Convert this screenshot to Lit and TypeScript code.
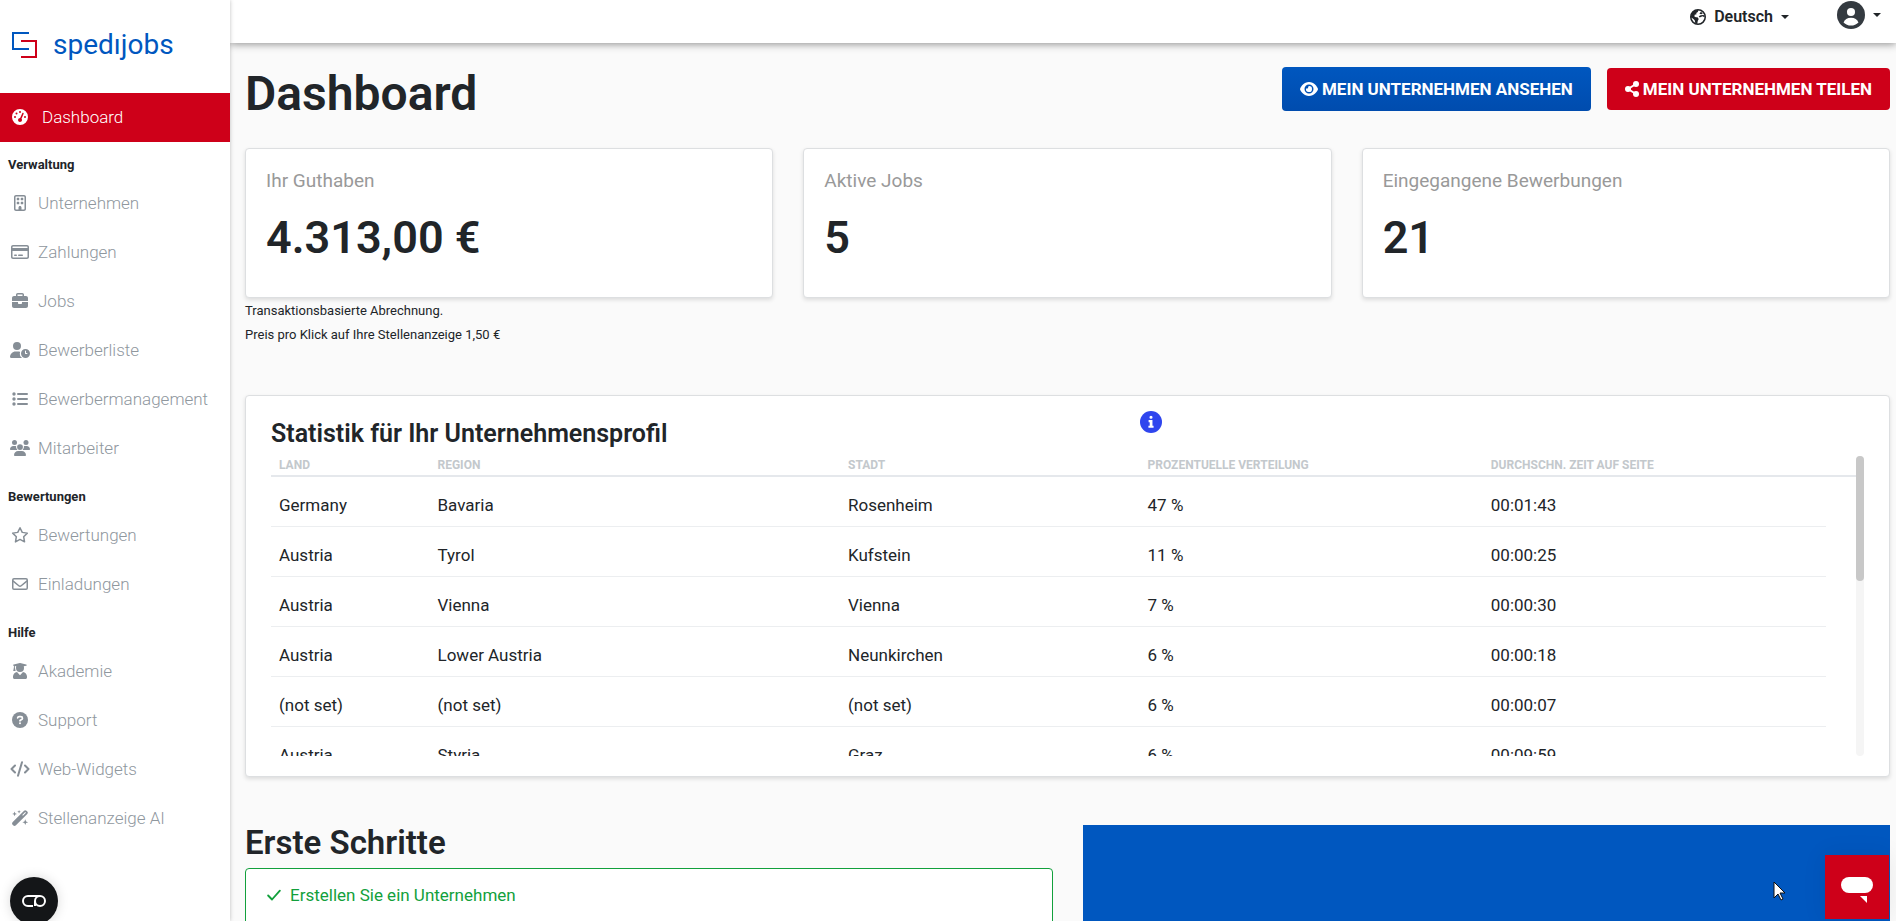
import { LitElement, html, svg, css, type SVGTemplateResult } from "lit";
import { customElement, property } from "lit/decorators.js";
import { classMap } from "lit/directives/class-map.js";

interface Glyph {
  box: string;
  art: SVGTemplateResult;
}

const glyphs: Record<string, Glyph> = {
  gauge: {
    box: "0 0 512 512",
    art: svg`<path fill-rule="evenodd" d="M0 256a256 256 0 1 1 512 0A256 256 0 1 1 0 256zM288 96a32 32 0 1 0-64 0 32 32 0 1 0 64 0zM256 416c35 0 64-29 64-64 0-16-6-31-16-42l69-158c5-12 0-26-12-32s-26 0-32 12l-69 158c-35 1-66 29-66 62 0 35 27 64 62 64zM176 144a32 32 0 1 0-64 0 32 32 0 1 0 64 0zM96 288a32 32 0 1 0 0-64 32 32 0 1 0 0 64zm352-32a32 32 0 1 0-64 0 32 32 0 1 0 64 0z"/>`,
  },
  building: {
    box: "0 0 384 512",
    art: svg`<path fill-rule="evenodd" d="M64 48c-8.800 0-16 7.200-16 16V448c0 8.800 7.200 16 16 16h80V400c0-26.500 21.500-48 48-48s48 21.500 48 48v64h80c8.800 0 16-7.200 16-16V64c0-8.800-7.200-16-16-16H64zM0 64C0 28.700 28.700 0 64 0H320c35.300 0 64 28.700 64 64V448c0 35.300-28.700 64-64 64H64c-35.300 0-64-28.700-64-64V64z"/><path d="M104 88h48a16 16 0 0 1 16 16v48a16 16 0 0 1-16 16h-48a16 16 0 0 1-16-16v-48a16 16 0 0 1 16-16zM232 88h48a16 16 0 0 1 16 16v48a16 16 0 0 1-16 16h-48a16 16 0 0 1-16-16v-48a16 16 0 0 1 16-16zM104 216h48a16 16 0 0 1 16 16v48a16 16 0 0 1-16 16h-48a16 16 0 0 1-16-16v-48a16 16 0 0 1 16-16zM232 216h48a16 16 0 0 1 16 16v48a16 16 0 0 1-16 16h-48a16 16 0 0 1-16-16v-48a16 16 0 0 1 16-16z"/>`,
  },
  card: {
    box: "0 0 576 512",
    art: svg`<path fill-rule="evenodd" d="M512 80c9 0 16 7 16 16v32H48V96c0-9 7-16 16-16H512zm16 144V416c0 9-7 16-16 16H64c-9 0-16-7-16-16V224H528zM64 32C29 32 0 61 0 96V416c0 35 29 64 64 64H512c35 0 64-29 64-64V96c0-35-29-64-64-64H64z"/><path d="M120 336a24 24 0 0 0 0 48h48a24 24 0 0 0 0-48zM248 336a24 24 0 0 0 0 48h112a24 24 0 0 0 0-48z"/>`,
  },
  briefcase: {
    box: "0 0 512 512",
    art: svg`<path fill-rule="evenodd" d="M184 48H328c4 0 8 4 8 8V96H176V56c0-4 4-8 8-8zm-56 8V96H64C29 96 0 125 0 160v96H512V160c0-35-29-64-64-64H384V56c0-31-25-56-56-56H184c-31 0-56 25-56 56zM512 288H320v32c0 18-14 32-32 32H224c-18 0-32-14-32-32V288H0V416c0 35 29 64 64 64H448c35 0 64-29 64-64V288z"/>`,
  },
  userClock: {
    box: "0 0 640 512",
    art: svg`<path d="M224 256A128 128 0 1 0 224 0a128 128 0 1 0 0 256zM178 304C80 304 0 384 0 482c0 17 13 30 30 30H393a176 176 0 0 1-70-196c-17-8-34-12-53-12z"/><path fill-rule="evenodd" d="M496 224a144 144 0 1 0 0 288 144 144 0 1 0 0-288zm-16 64c0-9 7-16 16-16s16 7 16 16v64h32c9 0 16 7 16 16s-7 16-16 16h-48c-9 0-16-7-16-16z"/>`,
  },
  list: {
    box: "0 0 512 512",
    art: svg`<circle cx="64" cy="96" r="54"/><circle cx="64" cy="256" r="54"/><circle cx="64" cy="416" r="54"/><path d="M192 64a32 32 0 0 0 0 64h288a32 32 0 0 0 0-64zM192 224a32 32 0 0 0 0 64h288a32 32 0 0 0 0-64zM192 384a32 32 0 0 0 0 64h288a32 32 0 0 0 0-64z"/>`,
  },
  users: {
    box: "0 0 640 512",
    art: svg`<circle cx="144" cy="80" r="80"/><circle cx="512" cy="80" r="80"/><circle cx="320" cy="224" r="92"/><path d="M0 299c0-59 48-107 107-107h43c16 0 31 4 45 10a128 128 0 0 0 41 118H21c-12 0-21-10-21-21zM640 299c0-59-48-107-107-107h-43c-16 0-31 4-45 10a128 128 0 0 1-41 118h215c12 0 21-10 21-21zM128 485c0-73 60-133 133-133h118c73 0 133 60 133 133 0 15-12 27-27 27H155c-15 0-27-12-27-27z"/>`,
  },
  star: {
    box: "0 0 512 512",
    art: svg`<path fill="none" stroke="currentColor" stroke-width="48" stroke-linejoin="round" d="M256 24l72 148 162 24-117 115 28 164-145-77-145 77 28-164L22 196l162-24z"/>`,
  },
  envelope: {
    box: "0 0 512 512",
    art: svg`<rect x="24" y="88" width="464" height="336" rx="40" fill="none" stroke="currentColor" stroke-width="48"/><path fill="none" stroke="currentColor" stroke-width="48" d="M28 158l190 155c22 18 54 18 76 0l190-155"/>`,
  },
  graduate: {
    box: "0 0 448 512",
    art: svg`<path d="M219 2 22 44c-29 6-29 34 0 41l8 2v58c-9 6-12 17-6 27L8 236c-3 11 3 20 12 20h50c9 0 15-9 12-20L66 172c6-10 3-21-6-27V94l44 11c-5 17-8 35-8 55a128 128 0 0 0 256 0c0-20-3-38-8-55l76-20c29-7 29-35 0-41L229 2c-3-1-7-1-10 0zM320 289 224 390l-96-101C56 299 0 361 0 434v30c0 27 21 48 48 48h352c27 0 48-21 48-48v-30c0-73-56-135-128-145z"/>`,
  },
  question: {
    box: "0 0 512 512",
    art: svg`<circle cx="256" cy="256" r="256"/><path fill="none" stroke="#fff" stroke-width="52" stroke-linecap="round" d="M180 190c4-28 22-42 48-42h54c32 0 54 22 54 50 0 20-10 34-28 44l-52 30v16"/><circle cx="256" cy="362" r="32" fill="#fff"/>`,
  },
  code: {
    box: "0 0 640 512",
    art: svg`<path fill="none" stroke="currentColor" stroke-width="64" stroke-linecap="round" stroke-linejoin="round" d="M160 144 48 256l112 112M480 144l112 112-112 112M384 40 256 472"/>`,
  },
  wand: {
    box: "0 0 512 512",
    art: svg`<path fill-rule="evenodd" d="M386 24 24 386c-28 28-28 60-6 82l26 26c22 22 54 22 82-6L488 126c24-24 24-52 0-76l-26-26c-24-24-52-24-76 0zm38 42 22 22-96 96-22-22z"/><path d="M82 48l22 54 54 22-54 22-22 54-22-54-54-22 54-22zM226 0l16 40 40 16-40 16-16 40-16-40-40-16 40-16zM424 298l26 66 66 26-66 26-26 66-26-66-66-26 66-26z"/>`,
  },
  globe: {
    box: "0 0 512 512",
    art: svg`<circle cx="256" cy="256" r="232" fill="none" stroke="currentColor" stroke-width="48"/><path d="M30 220C60 100 150 30 270 36l-20 60-50 30 10 40-60 20-10 50 50 26 50 4 40 50-30 60-20 100-60-20-20-100-60-50-70-40zM350 90l60 50-50 30-60-20zM420 190l60 20-20 50-60-30-90 40-30-40 60-30z"/>`,
  },
  avatar: {
    box: "0 0 512 512",
    art: svg`<circle cx="256" cy="256" r="256"/><circle cx="256" cy="200" r="74" fill="#fff"/><path fill="#fff" d="M120 392c20-52 66-84 136-84s116 32 136 84c-36 38-84 58-136 58s-100-20-136-58z"/>`,
  },
  eye: {
    box: "0 0 576 512",
    art: svg`<path fill-rule="evenodd" d="M288 32c-81 0-146 37-193 81C48 156 17 208 3 244c-3 8-3 17 0 25 14 36 45 88 92 131 47 44 112 80 193 80s146-37 193-80c47-44 78-96 93-131 3-8 3-17 0-25-15-36-46-88-93-131C434 69 369 32 288 32zM144 256a144 144 0 1 1 288 0 144 144 0 1 1-288 0z"/><path d="M288 160a96 96 0 1 1-94 78c30 16 74-6 68-46-2-12 8-28 26-32z"/>`,
  },
  share: {
    box: "0 0 448 512",
    art: svg`<circle cx="352" cy="96" r="96"/><circle cx="96" cy="256" r="96"/><circle cx="352" cy="416" r="96"/><path fill="none" stroke="currentColor" stroke-width="64" d="M352 96 96 256l256 160"/>`,
  },
  info: {
    box: "0 0 512 512",
    art: svg`<circle cx="256" cy="256" r="256"/><path fill="#fff" d="M256 108a36 36 0 1 1 0 72 36 36 0 1 1 0-72zM200 212h90v130h26v50H196v-50h30v-80h-26z"/>`,
  },
  check: {
    box: "0 0 448 512",
    art: svg`<path fill="none" stroke="currentColor" stroke-width="60" stroke-linecap="round" stroke-linejoin="round" d="M36 272l124 128L412 116"/>`,
  },
};

@customElement("ui-icon")
class UiIcon extends LitElement {
  @property() name = "";
  static styles = css`
    :host {
      display: inline-flex;
      justify-content: center;
      align-items: center;
      flex: none;
    }
    .glyph {
      height: 100%;
      fill: currentColor;
      overflow: visible;
    }
  `;
  render() {
    const g = glyphs[this.name];
    return html`<svg class="glyph" viewBox=${g.box} aria-hidden="true">${g.art}</svg>`;
  }
}

@customElement("side-nav")
class SideNav extends LitElement {
  private groups = [
    {
      title: "Verwaltung",
      items: [
        ["building", "Unternehmen"],
        ["card", "Zahlungen"],
        ["briefcase", "Jobs"],
        ["userClock", "Bewerberliste"],
        ["list", "Bewerbermanagement"],
        ["users", "Mitarbeiter"],
      ],
    },
    {
      title: "Bewertungen",
      items: [
        ["star", "Bewertungen"],
        ["envelope", "Einladungen"],
      ],
    },
    {
      title: "Hilfe",
      items: [
        ["graduate", "Akademie"],
        ["question", "Support"],
        ["code", "Web-Widgets"],
        ["wand", "Stellenanzeige AI"],
      ],
    },
  ];

  static styles = css`
    :host {
      display: block;
      background: #fff;
      box-shadow: 0 0 4px rgba(0, 0, 0, 0.25);
      overflow: hidden;
    }
    .brand {
      display: flex;
      align-items: center;
      gap: 15px;
      height: 93px;
      padding: 0 12px 4px;
      box-sizing: border-box;
      color: #0057bf;
      font-size: 28px;
      line-height: 32px;
      text-decoration: none;
    }
    .mark {
      width: 26px;
      height: 26px;
      flex: none;
    }
    .item {
      display: flex;
      align-items: center;
      gap: 8px;
      height: 49px;
      padding: 0 0 2px 10px;
      box-sizing: border-box;
      color: #8f979e;
      font-size: 17px;
      font-weight: 300;
      text-decoration: none;
    }
    .item ui-icon {
      width: 20px;
      height: 16px;
      color: #868e96;
    }
    .active {
      gap: 12px;
      background: #ce0019;
      color: #fff;
    }
    .active ui-icon {
      color: #fff;
    }
    .group {
      margin: 0;
      padding: 14px 8px 4px;
      color: #212529;
      font-size: 13px;
      font-weight: 700;
      line-height: 20px;
    }
    .group:first-of-type {
      padding-top: 13px;
    }
  `;

  private item(icon: string, label: string, active = false) {
    return html`<a
      href="#"
      class=${classMap({ item: true, active })}
      ><ui-icon name=${icon}></ui-icon>${label}</a
    >`;
  }

  render() {
    return html`
      <a class="brand" href="#">
        <svg class="mark" viewBox="0 0 26 26" fill="none" stroke-width="2" aria-hidden="true">
          <path stroke="#0057bf" d="M17 1H1v16h16" />
          <path stroke="#ce0019" d="M9 9h15v16H9" />
        </svg>
        <span>spedıjobs</span>
      </a>
      <nav>
        ${this.item("gauge", "Dashboard", true)}
        ${this.groups.map(
          (g) => html`
            <h6 class="group">${g.title}</h6>
            ${g.items.map(([icon, label]) => this.item(icon, label))}
          `
        )}
      </nav>
    `;
  }
}

@customElement("top-bar")
class TopBar extends LitElement {
  static styles = css`
    :host {
      display: flex;
      justify-content: flex-end;
      align-items: flex-start;
      gap: 48px;
      height: 43px;
      padding-right: 15px;
      box-sizing: border-box;
      background: #fff;
      box-shadow: 0 1px 8px rgba(0, 0, 0, 0.45);
    }
    button {
      display: flex;
      align-items: center;
      gap: 8px;
      padding: 0;
      border: 0;
      background: none;
      color: #212529;
      font: 600 16px/34px Roboto, sans-serif;
    }
    .account {
      height: 30px;
    }
    .globe {
      width: 16px;
      height: 16px;
    }
    .avatar {
      width: 28px;
      height: 28px;
      color: #343a40;
    }
    .caret {
      border: 4px solid transparent;
      border-top-color: currentColor;
      border-bottom: 0;
    }
  `;
  render() {
    return html`
      <button type="button">
        <ui-icon class="globe" name="globe"></ui-icon>Deutsch<span class="caret"></span>
      </button>
      <button type="button" class="account" aria-label="Konto">
        <ui-icon class="avatar" name="avatar"></ui-icon><span class="caret"></span>
      </button>
    `;
  }
}

@customElement("stats-card")
class StatsCard extends LitElement {
  private heads = ["LAND", "REGION", "STADT", "PROZENTUELLE VERTEILUNG", "DURCHSCHN. ZEIT AUF SEITE"];
  private rows = [
    ["Germany", "Bavaria", "Rosenheim", "47 %", "00:01:43"],
    ["Austria", "Tyrol", "Kufstein", "11 %", "00:00:25"],
    ["Austria", "Vienna", "Vienna", "7 %", "00:00:30"],
    ["Austria", "Lower Austria", "Neunkirchen", "6 %", "00:00:18"],
    ["(not set)", "(not set)", "(not set)", "6 %", "00:00:07"],
    ["Austria", "Styria", "Graz", "6 %", "00:09:59"],
  ];

  static styles = css`
    :host {
      display: block;
      padding: 15px 25px 20px;
      border: 1px solid #dddfe1;
      border-radius: 4px;
      background: #fff;
      box-shadow: 0 2px 4px rgba(0, 0, 0, 0.12);
    }
    .head {
      display: grid;
      grid-template-columns: 6fr 5fr;
      align-items: start;
      padding-bottom: 8px;
    }
    h3 {
      margin: 0;
      padding-top: 9px;
      font-size: 25px;
      font-weight: 600;
      line-height: 28px;
    }
    .info {
      width: 22px;
      height: 22px;
      color: #2f45ee;
    }
    .body {
      display: flex;
      height: 300px;
    }
    .scroll {
      flex: 1;
      overflow-y: auto;
      scrollbar-width: none;
    }
    table {
      width: 100%;
      table-layout: fixed;
      border-collapse: separate;
      border-spacing: 0;
      text-align: left;
    }
    .land {
      width: 10%;
    }
    .region {
      width: 25.9%;
    }
    .town {
      width: 18.9%;
    }
    .end {
      width: 30px;
    }
    th {
      padding: 0 8px;
      border-bottom: 2px solid #e5e8ec;
      color: #c3c8cc;
      font-size: 12px;
      font-weight: 700;
      line-height: 19px;
    }
    .end-head {
      padding: 0;
    }
    td {
      padding: 16px 8px 9px;
      border-bottom: 1px solid #eceef0;
      font-size: 17px;
      line-height: 24px;
    }
    .track {
      width: 8px;
      border-radius: 4px;
      background: #f5f5f5;
    }
    .thumb {
      height: 125px;
      border-radius: 4px;
      background: #c8c8c8;
    }
  `;

  render() {
    return html`
      <div class="head">
        <h3>Statistik für Ihr Unternehmensprofil</h3>
        <ui-icon class="info" name="info"></ui-icon>
      </div>
      <div class="body">
        <div class="scroll">
          <table>
            <colgroup>
              <col class="land" />
              <col class="region" />
              <col class="town" />
              <col />
              <col />
              <col class="end" />
            </colgroup>
            <thead>
              <tr>
                ${this.heads.map((h) => html`<th scope="col">${h}</th>`)}
                <th class="end-head"></th>
              </tr>
            </thead>
            <tbody>
              ${this.rows.map((r) => html`<tr>${r.map((c) => html`<td>${c}</td>`)}</tr>`)}
            </tbody>
          </table>
        </div>
        <div class="track"><div class="thumb"></div></div>
      </div>
    `;
  }
}

@customElement("app-root")
class AppRoot extends LitElement {
  private figures = [
    ["Ihr Guthaben", "4.313,00 €"],
    ["Aktive Jobs", "5"],
    ["Eingegangene Bewerbungen", "21"],
  ];

  static styles = css`
    :host {
      display: grid;
      grid-template-columns: 230px minmax(0, 1fr);
      grid-template-rows: auto minmax(0, 1fr);
      height: 100vh;
      overflow: hidden;
      background: #fafafa;
      color: #212529;
      font-family: Roboto, sans-serif;
      font-size: 17px;
    }
    side-nav {
      grid-row: 1 / 3;
      z-index: 2;
    }
    top-bar {
      z-index: 1;
    }
    main {
      overflow-y: auto;
      scrollbar-width: none;
      padding: 21px 6px 24px 15px;
    }
    .title-row {
      display: flex;
      justify-content: space-between;
      align-items: flex-start;
      margin-bottom: 24px;
    }
    h1 {
      margin: 0;
      font-size: 48px;
      font-weight: 600;
      line-height: 60px;
    }
    .actions {
      display: flex;
      align-items: center;
      gap: 16px;
      padding-top: 3px;
    }
    .btn {
      display: flex;
      align-items: center;
      gap: 4px;
      height: 42px;
      padding: 0 18px;
      border: 0;
      border-radius: 4px;
      background: #ce0019;
      color: #fff;
      font: 700 17px/24px Roboto, sans-serif;
    }
    .btn ui-icon {
      height: 16px;
    }
    .view {
      height: 44px;
      background: linear-gradient(#0057bf, #004cae);
    }
    .figures {
      display: grid;
      grid-template-columns: repeat(3, minmax(0, 1fr));
      gap: 30px;
      padding-bottom: 1px;
    }
    .figure {
      padding: 20px 20px 30px;
      border: 1px solid #dddfe1;
      border-radius: 4px;
      background: #fff;
      box-shadow: 0 2px 4px rgba(0, 0, 0, 0.12);
    }
    .label {
      color: #999;
      font-size: 19px;
      line-height: 24px;
    }
    .value {
      margin-top: 16px;
      font-size: 45px;
      font-weight: 600;
      line-height: 58px;
    }
    .note {
      margin: 0;
      font-size: 13px;
      line-height: 24px;
    }
    stats-card {
      margin: 48px 0;
    }
    .lower {
      display: grid;
      grid-template-columns: repeat(2, minmax(0, 1fr));
      gap: 30px;
    }
    h2 {
      margin: 0 0 8px;
      font-size: 33px;
      font-weight: 600;
      line-height: 35px;
    }
    .step {
      display: flex;
      gap: 9px;
      padding: 14px 21px 40px;
      border: 1px solid #12a03c;
      border-radius: 4px;
      background: #fff;
      color: #12a03c;
      line-height: 24px;
    }
    .step ui-icon {
      width: 14px;
      height: 16px;
      margin-top: 4px;
    }
    .promo {
      min-height: 160px;
      background: #0057bf;
    }
    .consent,
    .chat {
      position: fixed;
      z-index: 3;
      padding: 0;
      border: 0;
    }
    .consent {
      left: 10px;
      bottom: -4px;
      width: 48px;
      height: 48px;
      border-radius: 50%;
      background: #141618;
      box-shadow: 0 0 12px rgba(0, 0, 0, 0.15);
    }
    .chat {
      right: 7px;
      bottom: 2px;
      width: 64px;
      height: 64px;
      background: #ce0019;
      box-shadow: 0 0 24px rgba(0, 0, 0, 0.08);
    }
    .art {
      display: block;
      width: 100%;
      height: 100%;
    }
    .pointer {
      position: fixed;
      z-index: 3;
      right: 110px;
      bottom: 20px;
      width: 13px;
      height: 20px;
    }
  `;

  render() {
    return html`
      <side-nav></side-nav>
      <top-bar></top-bar>
      <main>
        <div class="title-row">
          <h1>Dashboard</h1>
          <div class="actions">
            <button type="button" class="btn view">
              <ui-icon name="eye"></ui-icon>MEIN UNTERNEHMEN ANSEHEN
            </button>
            <button type="button" class="btn">
              <ui-icon name="share"></ui-icon>MEIN UNTERNEHMEN TEILEN
            </button>
          </div>
        </div>
        <section class="figures">
          ${this.figures.map(
            ([label, value]) => html`<div class="figure">
              <div class="label">${label}</div>
              <div class="value">${value}</div>
            </div>`
          )}
        </section>
        <p class="note">Transaktionsbasierte Abrechnung.</p>
        <p class="note">Preis pro Klick auf Ihre Stellenanzeige 1,50 €</p>
        <stats-card></stats-card>
        <section class="lower">
          <div>
            <h2>Erste Schritte</h2>
            <div class="step"><ui-icon name="check"></ui-icon>Erstellen Sie ein Unternehmen</div>
          </div>
          <div class="promo"></div>
        </section>
      </main>
      <button type="button" class="consent" aria-label="Cookie-Einstellungen">
        <svg class="art" viewBox="0 0 48 48" fill="none" stroke="#fff" stroke-width="2" aria-hidden="true">
          <path d="M23 29h-5a5 5 0 0 1 0-10h12" />
          <circle cx="30" cy="24" r="5" />
          <path d="M25 24v5" />
        </svg>
      </button>
      <button type="button" class="chat" aria-label="Chat">
        <svg class="art" viewBox="0 0 64 64" fill="#fff" aria-hidden="true">
          <rect x="16" y="22" width="32" height="16" rx="8" />
          <path d="M35 41h7v7z" />
        </svg>
      </button>
      <svg class="pointer" viewBox="0 0 13 20" aria-hidden="true">
        <path
          fill="#fff"
          stroke="#111"
          d="M1 1v16l4-4 3 6 2-1-3-6h5z"
        />
      </svg>
    `;
  }
}
